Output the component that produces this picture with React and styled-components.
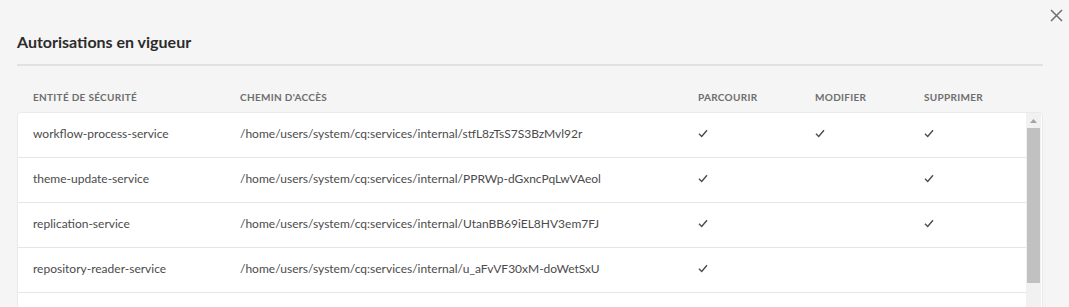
import styled, { createGlobalStyle } from 'styled-components';

const GlobalStyle = createGlobalStyle`
  html, body {
    margin: 0;
    padding: 0;
    background: #f5f5f5;
    font-family: Lato, "Open Sans", sans-serif;
    color: #4b4b4b;
  }
`;

const rows = [
  {
    entity: 'workflow-process-service',
    path: '/home/users/system/cq:services/internal/stfL8zTsS7S3BzMvl92r',
    browse: true,
    modify: true,
    remove: true,
  },
  {
    entity: 'theme-update-service',
    path: '/home/users/system/cq:services/internal/PPRWp-dGxncPqLwVAeol',
    browse: true,
    modify: false,
    remove: true,
  },
  {
    entity: 'replication-service',
    path: '/home/users/system/cq:services/internal/UtanBB69iEL8HV3em7FJ',
    browse: true,
    modify: false,
    remove: true,
  },
  {
    entity: 'repository-reader-service',
    path: '/home/users/system/cq:services/internal/u_aFvVF30xM-doWetSxU',
    browse: true,
    modify: false,
    remove: false,
  },
  {
    entity: '',
    path: '',
    browse: false,
    modify: false,
    remove: false,
  },
];

const columns = '207px 458px 117px 109px 1fr';

function Check() {
  return (
    <svg width="10" height="9" viewBox="0 0 10 9">
      <path d="M1 4.8 L3.7 7.4 L9 1.2" fill="none" stroke="#4b4b4b" strokeWidth="1.4" />
    </svg>
  );
}

function App() {
  return (
    <Page>
      <GlobalStyle />
      <CloseButton aria-label="Fermer">
        <svg width="13" height="13" viewBox="0 0 13 13">
          <path d="M1 1 L12 12 M12 1 L1 12" stroke="#6e6e6e" strokeWidth="1.5" />
        </svg>
      </CloseButton>
      <Title>Autorisations en vigueur</Title>
      <Divider />
      <HeaderRow>
        <HeadCell>Entité de sécurité</HeadCell>
        <HeadCell>Chemin d'accès</HeadCell>
        <HeadCell>Parcourir</HeadCell>
        <HeadCell>Modifier</HeadCell>
        <HeadCell>Supprimer</HeadCell>
      </HeaderRow>
      <TableBox>
        <Rows>
          {rows.map((r, i) => (
            <Row key={i}>
              <Cell>{r.entity}</Cell>
              <Cell>{r.path}</Cell>
              <Cell>{r.browse && <Check />}</Cell>
              <Cell>{r.modify && <Check />}</Cell>
              <Cell>{r.remove && <Check />}</Cell>
            </Row>
          ))}
        </Rows>
        <Scrollbar>
          <ArrowButton>
            <svg width="7" height="4" viewBox="0 0 7 4">
              <path d="M0 4 L3.5 0 L7 4 Z" fill="#a3a3a3" />
            </svg>
          </ArrowButton>
          <Thumb />
        </Scrollbar>
      </TableBox>
    </Page>
  );
}

export default App;

const Page = styled.div`
  position: relative;
  height: 307px;
  overflow: hidden;
  padding: 0 26px 0 17px;
`;

const CloseButton = styled.button`
  position: absolute;
  top: 8px;
  right: 5px;
  width: 15px;
  height: 15px;
  padding: 0;
  border: none;
  background: none;
  display: flex;
  align-items: center;
  justify-content: center;
`;

const Title = styled.h2`
  margin: 0;
  padding-top: 32px;
  height: 20px;
  line-height: 20px;
  font-size: 16px;
  font-weight: 700;
  color: #2c2c2c;
  padding-bottom: 12px;
`;

const Divider = styled.div`
  height: 2px;
  background: #e1e1e1;
`;

const HeaderRow = styled.div`
  display: grid;
  grid-template-columns: ${columns};
  align-items: center;
  height: 46px;
  padding: 0 16px;
  margin-right: 17px;
`;

const HeadCell = styled.div`
  font-size: 10px;
  font-weight: 700;
  letter-spacing: 0.03em;
  text-transform: uppercase;
  color: #6e6e6e;
  padding-top: 15px;
`;

const TableBox = styled.div`
  display: flex;
  background: #fff;
  border: 1px solid #eaeaea;
  border-radius: 4px;
  height: 240px;
`;

const Rows = styled.div`
  flex: 1;
  display: flex;
  flex-direction: column;
`;

const Row = styled.div`
  display: grid;
  grid-template-columns: ${columns};
  align-items: center;
  height: 44px;
  flex-shrink: 0;
  padding: 0 15px;
  border-bottom: 1px solid #e6e6e6;
`;

const Cell = styled.div`
  font-size: 12px;
  color: #4b4b4b;
  white-space: nowrap;
  padding-bottom: 3px;
  display: flex;
  align-items: center;
`;

const Scrollbar = styled.div`
  width: 15px;
  margin-right: 1px;
  background: #f1f1f1;
  display: flex;
  flex-direction: column;
  align-items: center;
`;

const ArrowButton = styled.div`
  height: 15px;
  width: 15px;
  display: flex;
  align-items: center;
  justify-content: center;
`;

const Thumb = styled.div`
  width: 13px;
  height: 155px;
  background: #c1c1c1;
`;
